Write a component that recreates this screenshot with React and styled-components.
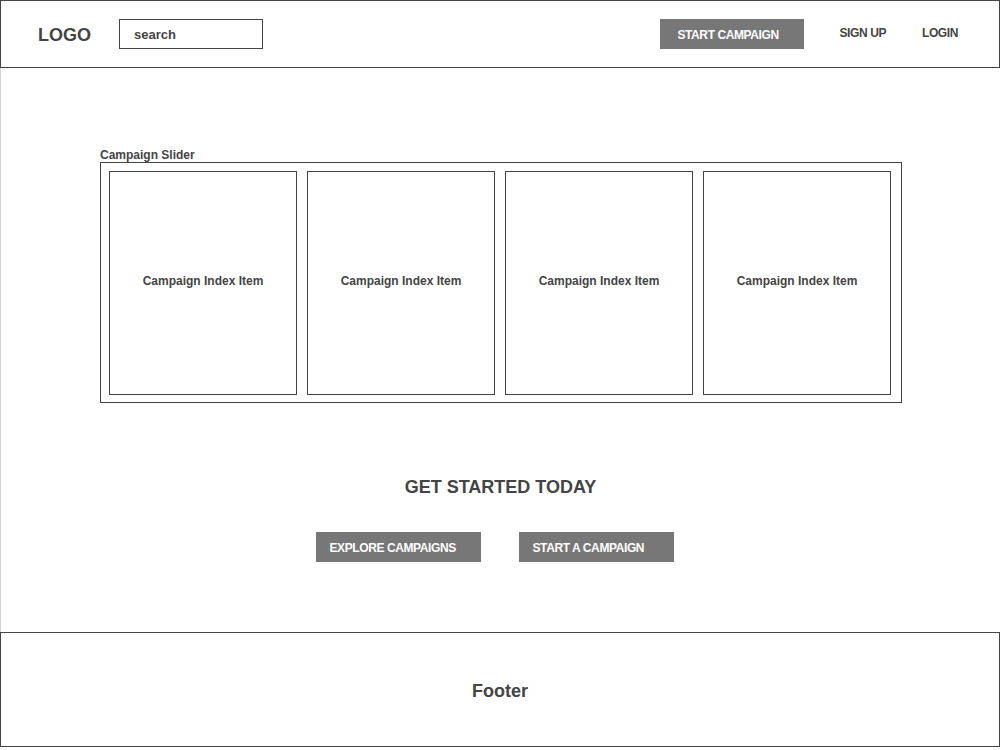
import React from "react";
import styled, { createGlobalStyle } from "styled-components";

const Global = createGlobalStyle`
  html, body { margin: 0; padding: 0; background: #fff; }
  body { font-family: "Liberation Sans", Arial, sans-serif; color: #444; }
  * { box-sizing: border-box; }
`;

const Page = styled.div`
  width: 1000px;
  display: flex;
  flex-direction: column;
`;

const Header = styled.header`
  height: 68px;
  border: 1px solid #444;
  display: flex;
  align-items: center;
  padding: 0 41px 0 37px;
`;

const Logo = styled.div`
  font-size: 18px;
  font-weight: bold;
  color: #444;
  line-height: 22px;
  margin-top: 2px;
`;

const Search = styled.div`
  width: 144px;
  height: 30px;
  margin-left: 28px;
  border: 1px solid #444;
  display: flex;
  align-items: center;
  padding-left: 14px;
  font-size: 13px;
  font-weight: bold;
  color: #444;
`;

const Nav = styled.nav`
  margin-left: auto;
  display: flex;
  align-items: center;
`;

const Button = styled.div`
  width: ${(p) => p.$w}px;
  height: 30px;
  background: #777;
  color: #fff;
  display: flex;
  align-items: center;
  padding-left: ${(p) => p.$pl || 14}px;
  padding-top: 2px;
  font-size: 12px;
  font-weight: bold;
  letter-spacing: -0.4px;
`;

const NavLink = styled.div`
  font-size: 12px;
  font-weight: bold;
  letter-spacing: -0.4px;
  color: #444;
  margin-left: ${(p) => p.$ml}px;
  margin-top: -3px;
`;

const Main = styled.main`
  height: 564px;
  border-left: 1px solid #d4d4d4;
  display: flex;
  flex-direction: column;
  align-items: center;
`;

const SliderWrap = styled.section`
  margin-top: 80px;
  width: 802px;
  margin-left: 1px;
`;

const SliderLabel = styled.div`
  font-size: 12px;
  font-weight: bold;
  line-height: 14px;
  color: #444;
`;

const Slider = styled.div`
  border: 1px solid #444;
  height: 241px;
  display: flex;
  gap: 10px;
  padding: 8px 10px 7px 8px;
`;

const Card = styled.div`
  width: 188px;
  height: 224px;
  border: 1px solid #444;
  display: flex;
  align-items: center;
  justify-content: center;
  font-size: 12px;
  font-weight: bold;
  color: #444;
  padding-bottom: 4px;
`;

const Heading = styled.h2`
  margin: 73px 0 0;
  font-size: 18px;
  line-height: 22px;
  font-weight: bold;
  color: #444;
`;

const Actions = styled.div`
  margin-top: 34px;
  display: flex;
  gap: 38px;
  margin-left: -12px;
`;

const Footer = styled.footer`
  height: 115px;
  border: 1px solid #444;
  display: flex;
  align-items: center;
  justify-content: center;
  font-size: 18px;
  font-weight: bold;
  color: #444;
  padding-top: 3px;
`;

export default function App() {
  return (
    <Page>
      <Global />
      <Header>
        <Logo>LOGO</Logo>
        <Search>search</Search>
        <Nav>
          <Button $w={144} $pl={17}>START CAMPAIGN</Button>
          <NavLink $ml={35}>SIGN UP</NavLink>
          <NavLink $ml={36}>LOGIN</NavLink>
        </Nav>
      </Header>
      <Main>
        <SliderWrap>
          <SliderLabel>Campaign Slider</SliderLabel>
          <Slider>
            {[0, 1, 2, 3].map((i) => (
              <Card key={i}>Campaign Index Item</Card>
            ))}
          </Slider>
        </SliderWrap>
        <Heading>GET STARTED TODAY</Heading>
        <Actions>
          <Button $w={165}>EXPLORE CAMPAIGNS</Button>
          <Button $w={155}>START A CAMPAIGN</Button>
        </Actions>
      </Main>
      <Footer>Footer</Footer>
    </Page>
  );
}
